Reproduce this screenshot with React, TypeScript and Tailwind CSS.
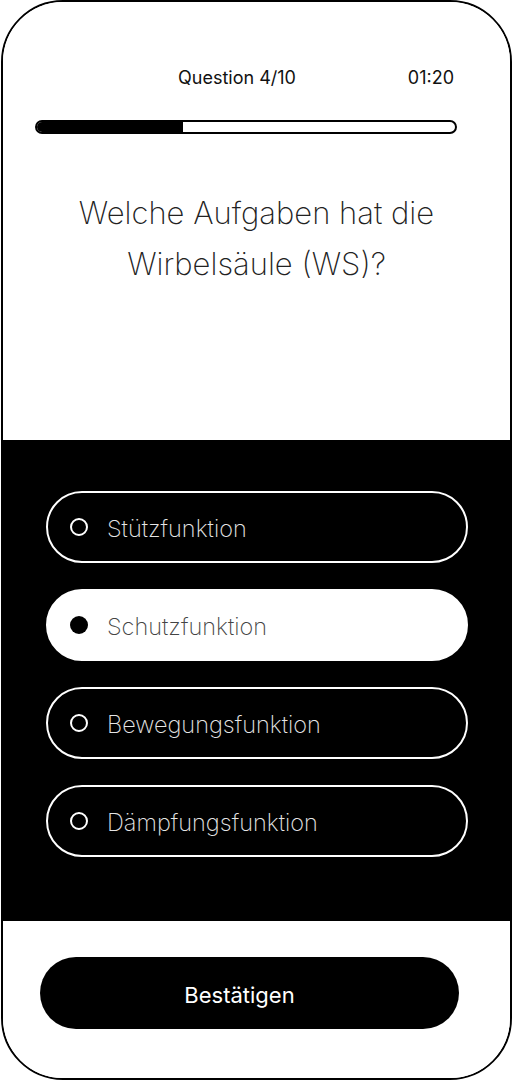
import React, { useState } from 'react';

const options = ['Stützfunktion', 'Schutzfunktion', 'Bewegungsfunktion', 'Dämpfungsfunktion'];

export default function App() {
  const [selected, setSelected] = useState(1);

  return (
    <div className="w-[512px] h-[1080px] bg-white font-['Inter',sans-serif]">
      <div className="w-[511px] h-[1080px] ml-[1px] rounded-[62px] border-2 border-black overflow-hidden flex flex-col">
        {/* top */}
        <div className="h-[438px] shrink-0 bg-white flex flex-col">
          <div className="mt-[66px] flex justify-between pl-[175px] pr-[56px] text-[18px] leading-[20px] text-[#111]">
            <span>Question 4/10</span>
            <span>01:20</span>
          </div>
          <div className="mt-[32px] ml-[32px] w-[422px] h-[14px] rounded-full border-2 border-black overflow-hidden flex">
            <div className="w-[146px] h-full bg-black" />
          </div>
          <h1 className="mt-[53px] text-center text-[31px] leading-[51px] font-extralight text-[#222] px-[50px]">
            Welche Aufgaben hat die Wirbelsäule (WS)?
          </h1>
        </div>

        {/* options */}
        <div className="h-[481px] shrink-0 bg-black flex flex-col gap-[26px] pt-[51px] px-[43px]">
          {options.map((o, i) => {
            const active = i === selected;
            return (
              <button
                key={o}
                onClick={() => setSelected(i)}
                className={
                  active
                    ? 'w-[422px] h-[72px] rounded-full border-2 border-white bg-white flex items-center pl-[22px] text-left'
                    : 'w-[422px] h-[72px] rounded-full border-2 border-white bg-black flex items-center pl-[22px] text-left'
                }
              >
                {active ? (
                  <span className="w-[18px] h-[18px] rounded-full bg-black shrink-0" />
                ) : (
                  <span className="w-[18px] h-[18px] rounded-full border-2 border-white shrink-0" />
                )}
                <span
                  className={
                    active
                      ? 'ml-[19px] pt-[3px] text-[23.5px] font-extralight text-[#444]'
                      : 'ml-[19px] pt-[3px] text-[23.5px] font-extralight text-[#e5e5e5]'
                  }
                >
                  {o}
                </span>
              </button>
            );
          })}
        </div>

        {/* bottom */}
        <div className="flex-1 bg-white pt-[36px] pl-[37px]">
          <button className="w-[419px] h-[72px] rounded-full bg-black text-white text-[22px] pr-[20px] pt-[5px]">
            Bestätigen
          </button>
        </div>
      </div>
    </div>
  );
}
